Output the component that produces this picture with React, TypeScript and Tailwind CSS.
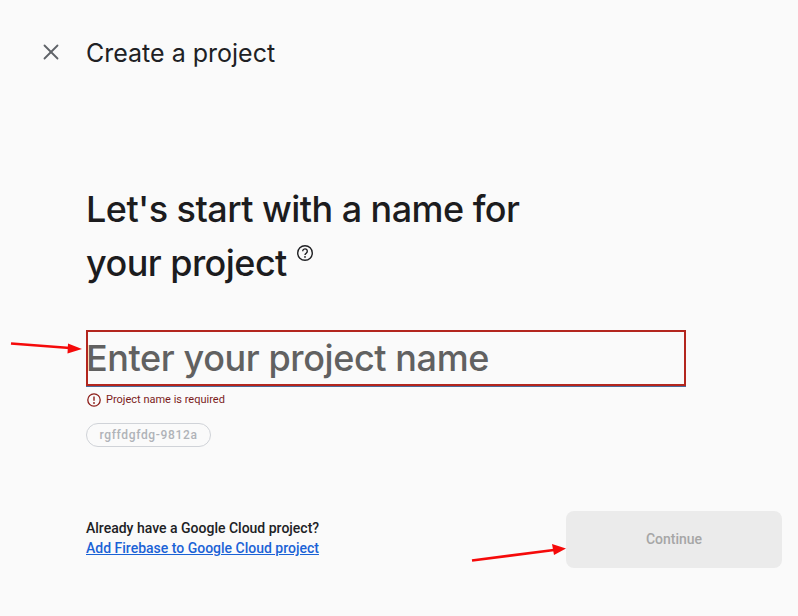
import React from 'react'
import { X } from 'lucide-react'

const Arrow: React.FC<{ className: string; width: number; height: number; d: string; head: string }> = ({ className, width, height, d, head }) => (
  <svg className={className} width={width} height={height} viewBox={`0 0 ${width} ${height}`}>
    <path d={d} stroke="#f50a0a" strokeWidth="2.6" fill="none" />
    <polygon points={head} fill="#f50a0a" />
  </svg>
)

const App: React.FC = () => {
  return (
    <div className="relative w-[798px] h-[616px] overflow-hidden bg-[#fafafa] font-['Roboto',sans-serif]">
      <header className="flex items-center h-[32px] mt-[36px] pl-[38px]">
        <X className="w-[26px] h-[26px] text-[#5f6368]" strokeWidth={1.7} />
        <h2 className="ml-[22px] mt-[1px] text-[25px] leading-[32px] text-[#202124] font-['Inter',sans-serif] tracking-[0px]">Create a project</h2>
      </header>

      <main className="pl-[86px]">
        <h1 className="mt-[114px] text-[36px] leading-[54px] font-medium text-[#1c1c1e] font-['Inter',sans-serif] tracking-[-0.55px]">
          Let's start with a name for
          <br />
          your project
          <span className="inline-block align-top mt-[8px] ml-[9px]">
            <svg width="18" height="18" viewBox="0 0 18 18">
              <circle cx="9" cy="9" r="7.3" stroke="#202124" strokeWidth="1.4" fill="none" />
              <path d="M6.7 7.2a2.3 2.3 0 1 1 3.6 1.9c-.8.5-1.3 1-1.3 2" stroke="#202124" strokeWidth="1.4" fill="none" />
              <circle cx="9" cy="12.9" r=".9" fill="#202124" />
            </svg>
          </span>
        </h1>

        <div className="mt-[40px] w-[600px] h-[56px] border-2 border-[#b3261e] shadow-[0_1px_0_#4a6a9a] flex items-center">
          <span className="ml-[-2px] text-[36px] leading-[52px] font-medium text-[#616161] font-['Inter',sans-serif] tracking-[-0.4px]">Enter your project name</span>
        </div>

        <div className="flex items-center mt-[7px] h-[14px]">
          <svg width="16" height="16" viewBox="0 0 16 16">
            <circle cx="8" cy="8" r="6.2" stroke="#8c1d18" strokeWidth="1.3" fill="none" />
            <path d="M8 4.5v4.2" stroke="#8c1d18" strokeWidth="1.4" />
            <circle cx="8" cy="11" r=".9" fill="#8c1d18" />
          </svg>
          <span className="ml-[4px] text-[11px] leading-[14px] text-[#7a1c1c]">Project name is required</span>
        </div>

        <div className="mt-[16px] w-[125px] h-[24px] rounded-full border border-[#d0d3d8] flex items-center justify-center text-[12px] font-medium tracking-[0.65px] text-[#b0b3b8]">
          rgffdgfdg-9812a
        </div>

        <div className="flex justify-between items-center mt-[64px] w-[696px]">
          <div className="mt-[-3px] text-[14px] leading-[20px] font-medium">
            <p className="text-[#202124]">Already have a Google Cloud project?</p>
            <a className="text-[#1a62d6] underline" href="#">Add Firebase to Google Cloud project</a>
          </div>
          <button className="w-[216px] h-[57px] rounded-[8px] bg-[#ebebeb] text-[14px] font-medium text-[#a6a6a6]">Continue</button>
        </div>
      </main>

      <Arrow className="absolute left-[10px] top-[340px]" width={74} height={16} d="M1 3.5 L60 8" head="72,9 58,3.5 57.5,13.5" />
      <Arrow className="absolute left-[470px] top-[542px]" width={98} height={22} d="M2 18.5 L84 8" head="96,6.5 82,2 84,13" />
    </div>
  )
}

export default App
